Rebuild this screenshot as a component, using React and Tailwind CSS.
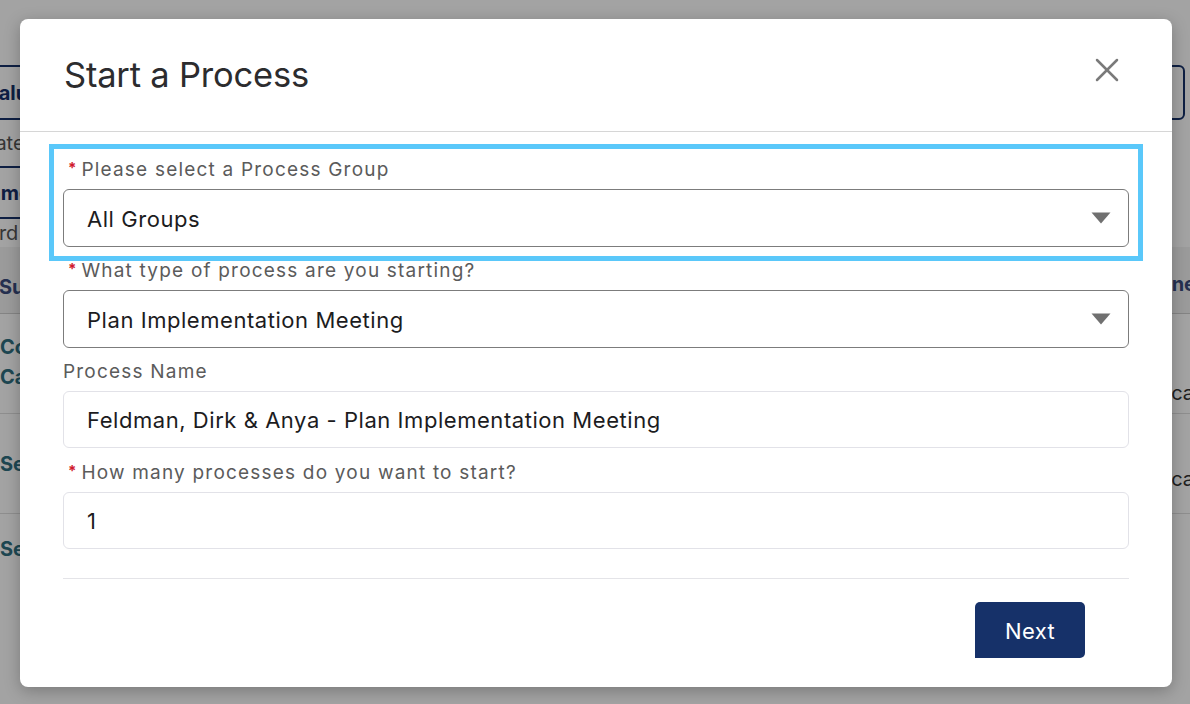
import { X } from "lucide-react";

const fieldLabel = "flex h-[24px] items-center text-[19px] tracking-[1.2px] text-[#5b5b5b]";

function Required({ children }) {
  return (
    <div className={`${fieldLabel} pl-[5px]`}>
      <span className="mr-[5px] -mt-[4px] text-[15px] font-bold tracking-normal text-[#d0182b]">*</span>
      {children}
    </div>
  );
}

function SelectBox({ value }) {
  return (
    <div className="mt-[7px] flex h-[58px] items-center justify-between rounded-[6px] border border-[#7c7c7c] bg-white pl-[23px] pr-[17px]">
      <span className="pt-[2px] text-[22px] tracking-[0.55px] text-[#1c1c1e]">{value}</span>
      <svg width="20" height="12" viewBox="0 0 20 12" className="text-[#707070]">
        <path d="M0.5 0.5 H19.5 L10 11.5 Z" fill="currentColor" />
      </svg>
    </div>
  );
}

function TextBox({ value }) {
  return (
    <div className="mt-[7px] flex h-[57px] items-center rounded-[6px] border border-[#e2e2e8] bg-white pl-[23px]">
      <span className="pt-[2px] text-[22px] tracking-[0.55px] text-[#1c1c1e]">{value}</span>
    </div>
  );
}

function BackgroundPage() {
  return (
    <div className="flex min-h-[704px] flex-col text-[20px]">
      <div className="flex h-[247px] justify-between">
        <div className="flex w-[40px] flex-col overflow-hidden">
          <div className="mt-[65px] flex h-[55px] items-center border-y-2 border-[#163169]">
            <span className="-ml-[15px] whitespace-nowrap font-bold text-[#163169]">Value</span>
          </div>
          <div className="flex h-[46px] items-center">
            <span className="-ml-[44px] whitespace-nowrap text-[#555]">Update</span>
          </div>
          <div className="flex h-[53px] items-center border-y-2 border-[#163169]">
            <span className="-ml-[26px] whitespace-nowrap font-bold text-[#163169]">Name</span>
          </div>
          <div className="flex h-[28px] items-center">
            <span className="-ml-[31px] whitespace-nowrap text-[#555]">Ward</span>
          </div>
        </div>
        <div className="flex w-[60px] flex-col">
          <div className="mt-[65px] h-[55px] w-[55px] rounded-[6px] border-2 border-[#163169]" />
        </div>
      </div>
      <div className="flex h-[67px] items-center justify-between border-b border-[#cfcfcf] bg-[#f3f3f3]">
        <span className="-ml-[1px] pt-[14px] font-bold text-[#3b4b7e]">Sub</span>
        <span className="mr-[-6px] pt-[8px] font-bold text-[#3b4b7e]">ne</span>
      </div>
      <div className="flex h-[100px] items-start justify-between border-b border-[#dedede]">
        <div className="pt-[18px] font-bold leading-[30px] text-[#2f6f80]">
          <div>Con</div>
          <div>Cas</div>
        </div>
        <span className="mr-[-4px] pt-[64px] text-[#333]">Loca</span>
      </div>
      <div className="flex h-[100px] items-center justify-between border-b border-[#dedede]">
        <span className="font-bold text-[#2f6f80]">Sen</span>
        <span className="mr-[-4px] pt-[30px] text-[#333]">Loca</span>
      </div>
      <div className="flex h-[70px] items-center">
        <span className="font-bold text-[#2f6f80]">Sen</span>
      </div>
    </div>
  );
}

export default function App() {
  return (
    <div className="relative h-[704px] w-full overflow-hidden bg-white font-['Inter','Noto_Sans',sans-serif]">
      <BackgroundPage />
      <div className="absolute inset-0 bg-black/[0.36]" />
      <div className="absolute inset-0 pl-[20px] pt-[19px]">
        <div className="flex h-[668px] w-[1152px] flex-col rounded-[8px] bg-white shadow-[0_4px_16px_rgba(0,0,0,0.25)]">
          <div className="flex h-[113px] items-center justify-between border-b border-[#d6d6d6] pl-[44px] pr-[45px]">
            <h1 className="text-[34.5px] font-normal tracking-[-0.2px] text-[#2c2c2e]">Start a Process</h1>
            <X size={40} strokeWidth={1.5} className="-mt-[10px] text-[#7a7a7a]" />
          </div>

          <div className="flex flex-col px-[43px] pt-[26px]">
            <div className="outline outline-[5px] outline-offset-[9px] outline-[#5ac8fa]">
              <Required>Please select a Process Group</Required>
              <SelectBox value="All Groups" />
            </div>

            <div className="mt-[12px]">
              <Required>What type of process are you starting?</Required>
              <SelectBox value="Plan Implementation Meeting" />
            </div>

            <div className="mt-[12px]">
              <div className={fieldLabel}>Process Name</div>
              <TextBox value="Feldman, Dirk & Anya - Plan Implementation Meeting" />
            </div>

            <div className="mt-[13px]">
              <Required>How many processes do you want to start?</Required>
              <TextBox value="1" />
            </div>

            <div className="mt-[29px] border-t border-[#e4e4e8]" />

            <div className="flex justify-end pr-[44px] pt-[23px]">
              <button className="flex h-[56px] w-[110px] items-center justify-center rounded-[5px] rounded-bl-none bg-[#163169] pt-[2px] text-[22px] tracking-[0.4px] text-white">
                Next
              </button>
            </div>
          </div>
        </div>
      </div>
    </div>
  );
}
